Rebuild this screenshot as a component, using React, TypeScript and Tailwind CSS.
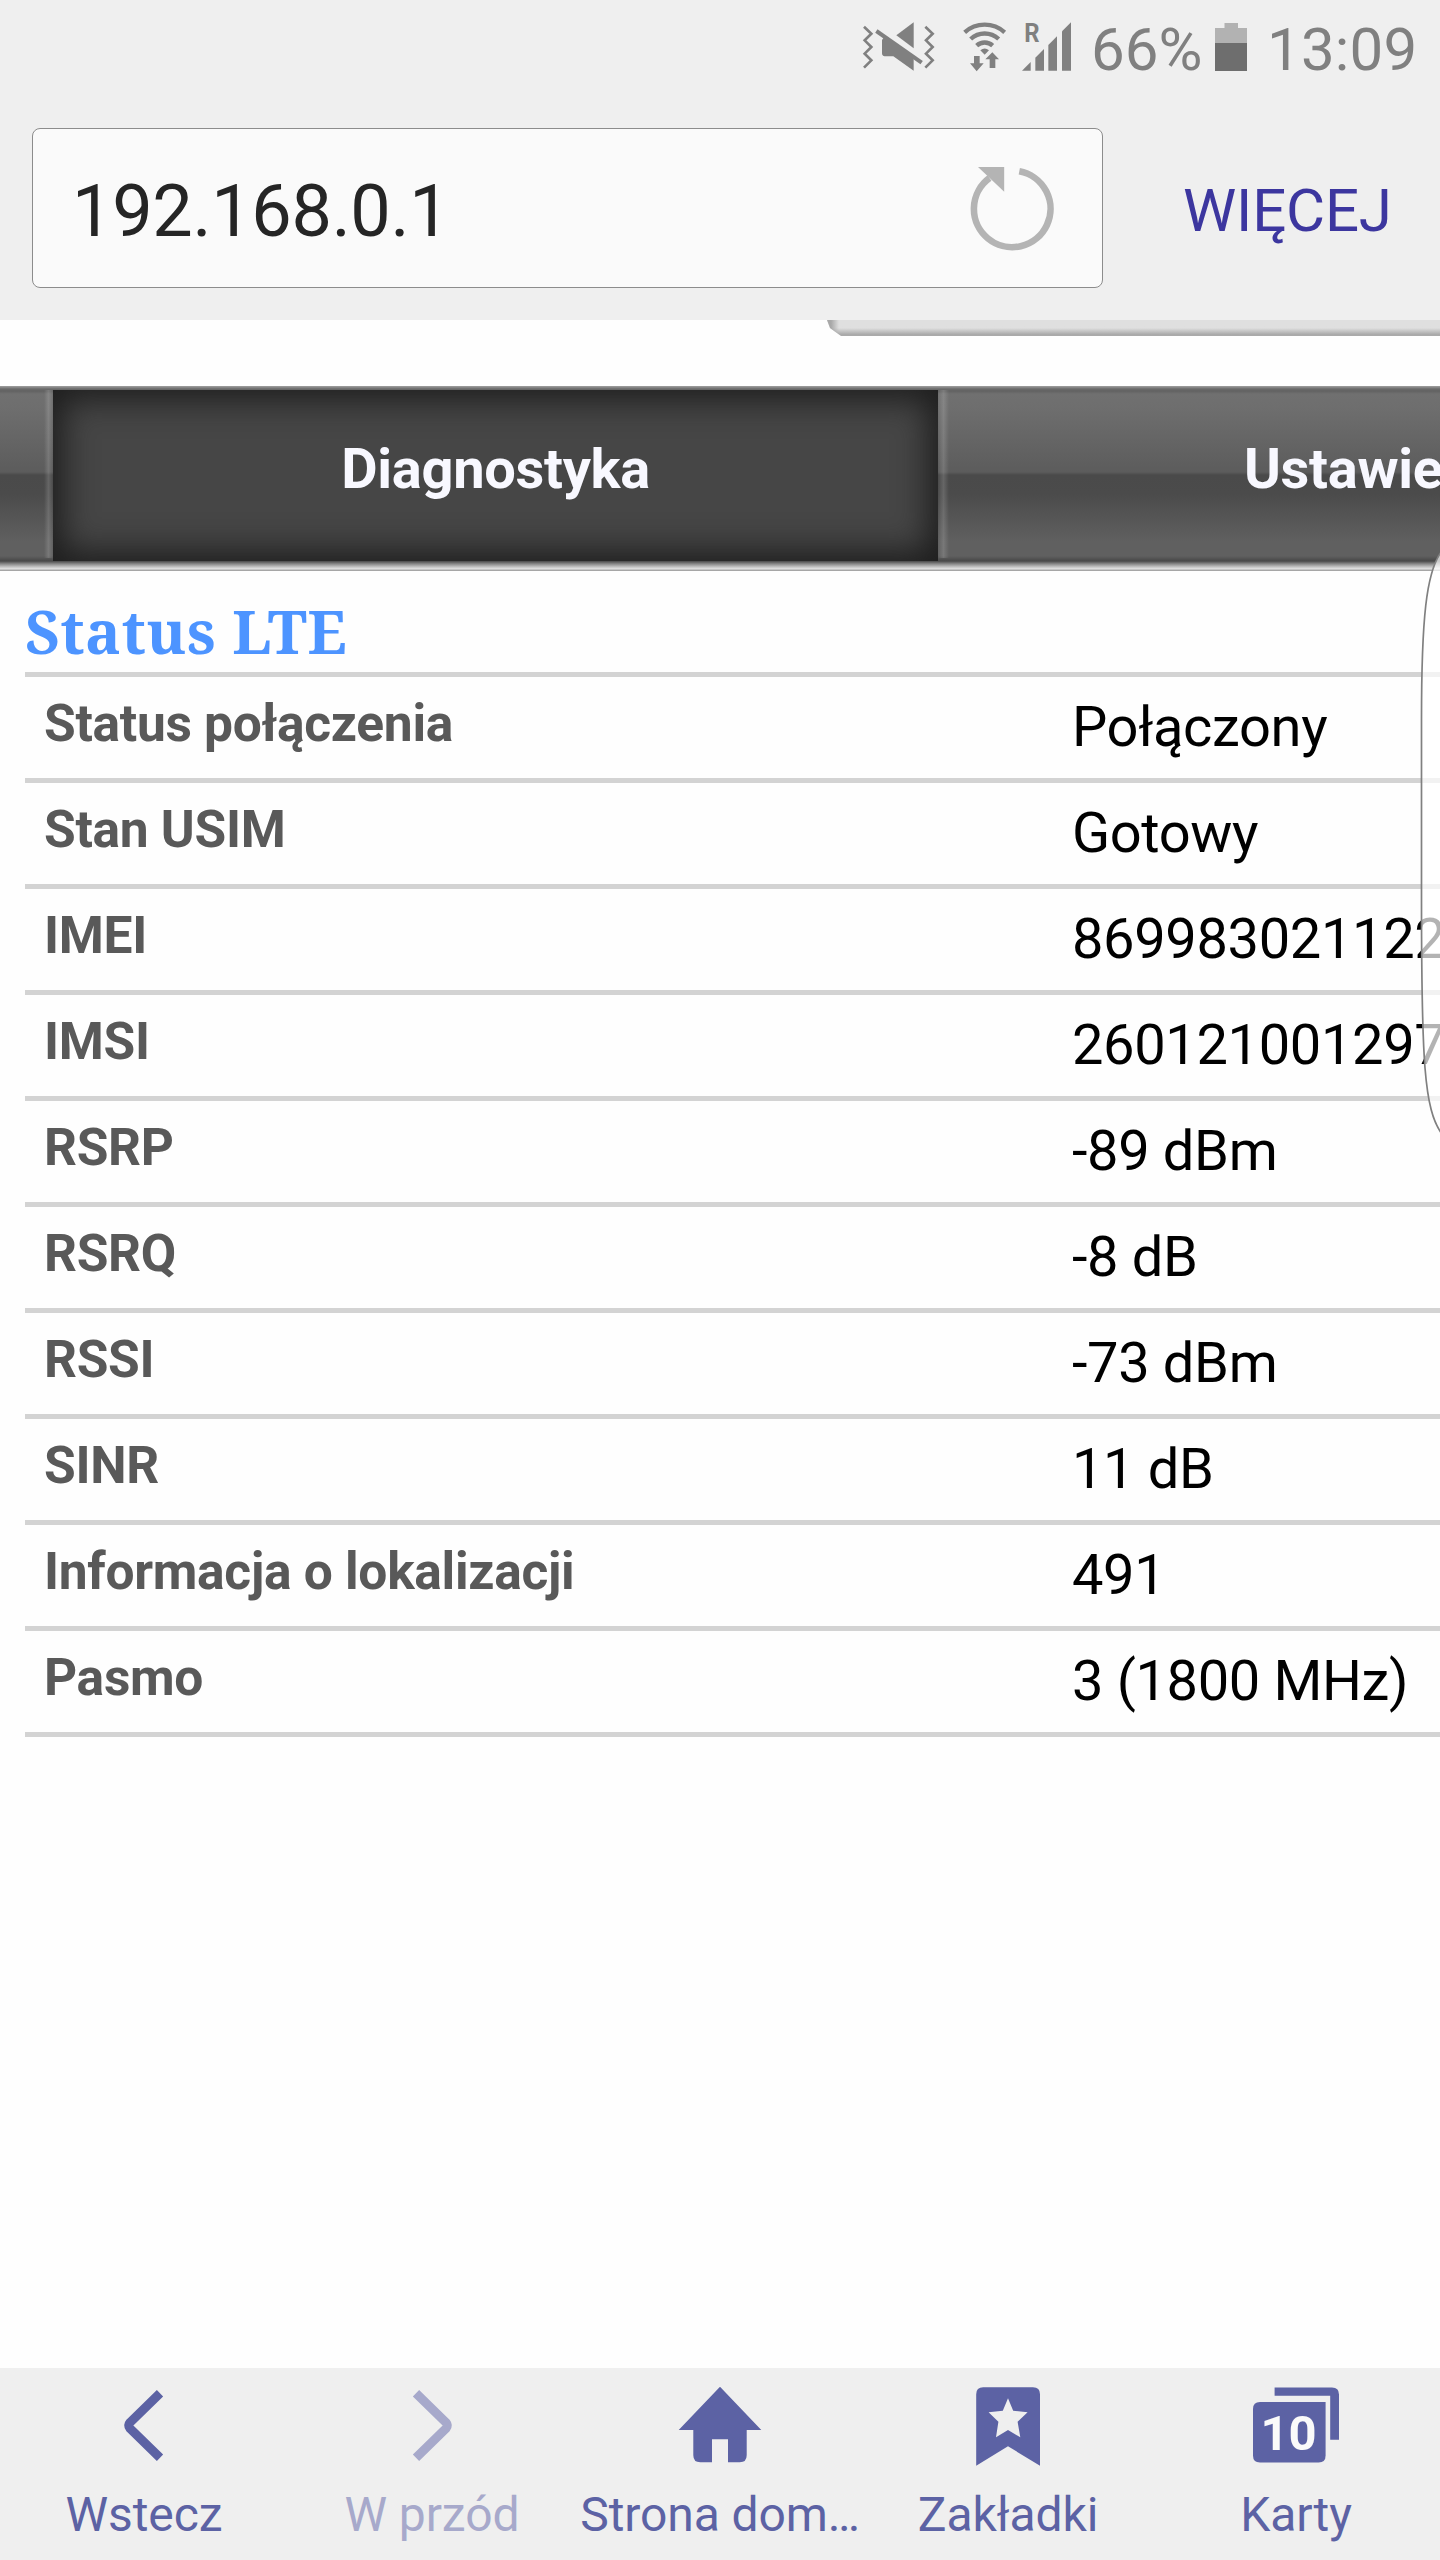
import { ReactNode } from "react";

const rows = [
  { label: "Status połączenia", value: "Połączony" },
  { label: "Stan USIM", value: "Gotowy" },
  { label: "IMEI", value: "869983021122" },
  { label: "IMSI", value: "260121001297" },
  { label: "RSRP", value: "-89 dBm" },
  { label: "RSRQ", value: "-8 dB" },
  { label: "RSSI", value: "-73 dBm" },
  { label: "SINR", value: "11 dB" },
  { label: "Informacja o lokalizacji", value: "491" },
  { label: "Pasmo", value: "3 (1800 MHz)" },
];

const MuteIcon = () => (
  <svg className="h-[60px] w-[90px] shrink-0" viewBox="0 0 270 180" fill="#808080">
    <g fill="none" stroke="#808080" strokeWidth="8">
      <path d="M12 26 34 47 14 67 34 87 14 107 34 127 12 149" />
      <path d="M196 26 218 47 198 67 218 87 198 107 218 127 196 149" />
      <path d="M49 39 185 134" strokeWidth="12" />
    </g>
    <path d="M161 13V91L109 52Z" />
    <path d="M72 58 161 120V158L100 115H74Q66 114 66 106V66Z" />
  </svg>
);

const WifiIcon = () => (
  <svg className="h-[60px] w-[50px] shrink-0" viewBox="300 0 150 180" fill="#808080">
    <g fill="none" stroke="#808080" strokeWidth="13">
      <path d="M314 43A90 90 0 0 1 434 43" />
      <path d="M332 63A62 62 0 0 1 416 63" />
      <path d="M350 83A35 35 0 0 1 398 83" />
    </g>
    <path d="M361 97Q374 86 387 97L374 110Z" />
    <path d="M342 114H359V136H371L350 160 330 136H342Z" />
    <path d="M397 103 417 124H406V150H389V124H376Z" />
  </svg>
);

const SignalIcon = () => (
  <svg className="h-[60px] w-[60px] shrink-0" viewBox="480 0 180 180" fill="#808080">
    <text x="493" y="72" fontSize="76" fontWeight="700" textLength="46" lengthAdjust="spacingAndGlyphs">
      R
    </text>
    <path d="M486 158 512 132V158Z" />
    <path d="M526 158V119L552 93V158Z" />
    <path d="M565 158V81L591 55V158Z" />
    <path d="M606 158V40L633 13V158Z" />
  </svg>
);

const StatusBar = () => (
  <div className="flex h-[99px] shrink-0 items-start pl-[860px] pt-[18px] text-[60px] leading-[63px] text-[#808080]">
    <MuteIcon />
    <div className="ml-[10px] flex">
      <WifiIcon />
      <div className="ml-[10px]">
        <SignalIcon />
      </div>
    </div>
    <span className="ml-[11px] w-[124px] whitespace-nowrap">66%</span>
    <svg className="mt-[5px] h-12 w-8 shrink-0" viewBox="0 0 32 48">
      <path d="M0 5H9.5V0H23V5H32V20H0Z" fill="#b2b2b2" />
      <path d="M0 20H32V48H0Z" fill="#6e6e6e" />
    </svg>
    <span className="ml-5 whitespace-nowrap tracking-[0.2px]">13:09</span>
  </div>
);

const AddressBar = () => (
  <div className="flex h-[221px] shrink-0 items-start pl-8 pt-[29px]">
    <div className="flex h-40 w-[1071px] items-center justify-between rounded-lg border border-[#8c8c8c] bg-[#fafafa] pl-[39px] pr-[46px]">
      <span className="pt-[7px] text-[72px] leading-none tracking-[-0.3px] text-[#252525]">192.168.0.1</span>
      <svg className="h-[90px] w-[90px]" viewBox="966.5 164 90 90">
        <path
          d="M1019.8 172.2A38.3 38.3 0 1 1 990 179"
          fill="none"
          stroke="#b4b4b4"
          strokeWidth="6.6"
        />
        <path d="M978.5 168H1004.7V192.7Z" fill="#b4b4b4" />
      </svg>
    </div>
    <span className="ml-[80px] pt-[52px] text-[60px] leading-[62px] tracking-[-0.2px] text-[#3c369f]">WIĘCEJ</span>
  </div>
);

const Divider = ({ className }: { className: string }) => (
  <div className={`h-[168px] shrink-0 bg-linear-to-r from-white/0 via-white/15 to-white/0 ${className}`} />
);

const glossy =
  "bg-[linear-gradient(180deg,#a0a0a0_0px,#6a6a6a_3px,#626262_5px,#707070_8px,#6e6e6e_22px,#5c5c5c_86px,#4a4a4a_89px,#4b4b4b_108px,#606060_156px,#606060_170px,#484848_175px,#8a8a8a_178px,#c4c4c4_181px,#e4e4e4_183px,#a6a6a6_184px,#a6a6a6_185px)]";

const Tabs = () => (
  <div className={`flex h-[185px] shrink-0 overflow-hidden text-[56px] font-bold leading-[166px] tracking-[-0.3px] text-[#f8f8ff] ${glossy}`}>
    <div className="w-[44px] shrink-0" />
    <div className="pt-1">
      <Divider className="w-[9px]" />
    </div>
    <div className="h-full w-[885px] shrink-0 pt-1">
      <div className="h-[171px] bg-[#464646] text-center leading-[158px] shadow-[inset_0_0_32px_10px_#1e1e1e]">
        Diagnostyka
      </div>
    </div>
    <div className="pt-1">
      <Divider className="w-[11px]" />
    </div>
    <div className="shrink-0 whitespace-nowrap pl-[295px]">Ustawienia</div>
  </div>
);

const StatusTable = () => (
  <section className="ml-[25px] grow overflow-hidden">
    <h2 className="h-[101px] pt-[30px] font-['Noto_Serif','Droid_Serif','DejaVu_Serif',serif] text-[60px] font-bold leading-[60px] tracking-[0.5px] text-[#4d94ff]">
      Status LTE
    </h2>
    <div className="border-t-[5px] border-[#d3d3d3]">
      {rows.map((row) => (
        <div key={row.label} className="flex h-[106px] whitespace-nowrap border-b-[5px] border-[#d3d3d3]">
          <div className="w-[1047px] shrink-0 pl-[19px] text-[51.5px] font-bold leading-[94px] tracking-[-0.3px] text-[#595959]">
            {row.label}
          </div>
          <div className="text-[56px] leading-[100px] tracking-[-0.36px] text-black">{row.value}</div>
        </div>
      ))}
    </div>
  </section>
);

const NavItem = ({ label, color, children }: { label: string; color: string; children: ReactNode }) => (
  <div className={`flex w-72 flex-col items-center ${color}`}>
    <svg className="h-[114px] w-[120px]" viewBox="0 0 120 114" fill="currentColor">
      {children}
    </svg>
    <span className="whitespace-nowrap text-[48px] leading-[66px] tracking-[-0.1px]">{label}</span>
  </div>
);

const BottomNav = () => (
  <nav className="flex h-48 shrink-0 bg-[#efefef]">
    <NavItem label="Wstecz" color="text-[#5c62a4]">
      <path d="M76 25.3 46 54.5Q43.5 57.5 46 60.5L76 89.7" fill="none" stroke="currentColor" strokeWidth="9" />
    </NavItem>
    <NavItem label="W przód" color="text-[#a7a9cb]">
      <path d="M44 25.3 74 54.5Q76.5 57.5 74 60.5L44 89.7" fill="none" stroke="currentColor" strokeWidth="9" />
    </NavItem>
    <NavItem label="Strona dom…" color="text-[#5c62a4]">
      <path d="M60 18.7 101.3 62H86.7V87.3Q86.7 94.3 79.7 94.3H68V71.3H52V94.3H40.3Q33.3 94.3 33.3 87.3V62H18.7Z" />
    </NavItem>
    <NavItem label="Zakładki" color="text-[#5c62a4]">
      <path d="M28.2 97.7V26.3Q28.2 19.3 35.2 19.3H85Q92 19.3 92 26.3V97.7L60 78.3Z" />
      <path
        d="M60 30.3 65.2 42.7 79.6 44.3 69.6 53.7 72.3 69.3 60 62 48 69.3 50.4 53.7 40.6 44.3 54.8 42.7Z"
        fill="#efefef"
      />
    </NavItem>
    <NavItem label="Karty" color="text-[#5c62a4]">
      <path d="M24 34H89.6V87.5Q89.6 94.5 82.6 94.5H24Q17 94.5 17 87.5V41Q17 34 24 34Z" />
      <path d="M38.6 19.5H96Q103 19.5 103 26.5V71.7H94.2V27.7H38.6Z" />
      <text x="52.5" y="82" textAnchor="middle" fontSize="49" fontWeight="700" fill="#fafafa">
        10
      </text>
    </NavItem>
  </nav>
);

// Handle of the edge panel, floating above the page
const EdgePanel = () => (
  <svg className="absolute right-0 top-[545px] h-[595px] w-[24px]" viewBox="1416 545 24 595">
    <path
      d="M1442 551C1426 571 1421.5 620 1421.5 720V900C1421.5 1060 1424 1110 1442 1134Z"
      fill="#fff"
      fillOpacity="0.7"
      stroke="#808080"
      strokeWidth="1.7"
    />
  </svg>
);

const App = () => {
  return (
    <div className="relative flex h-[2560px] w-[1440px] flex-col overflow-hidden bg-[#fefefe] font-[Roboto,sans-serif]">
      <header className="flex shrink-0 flex-col bg-[#efefef]">
        <StatusBar />
        <AddressBar />
      </header>
      <div className="h-[66px] shrink-0 pl-[827px]">
        <div className="h-4 bg-linear-to-b from-[#dfdfdf] from-50% to-[#aaa] to-90% [clip-path:polygon(0_0,100%_0,100%_100%,14px_100%,3px_50%)]">
          <div className="h-4 w-5 bg-linear-to-r from-[#a8a8a8] from-20% to-[#a8a8a8]/0 to-60%" />
        </div>
      </div>
      <Tabs />
      <StatusTable />
      <BottomNav />
      <EdgePanel />
    </div>
  );
};

export default App;
